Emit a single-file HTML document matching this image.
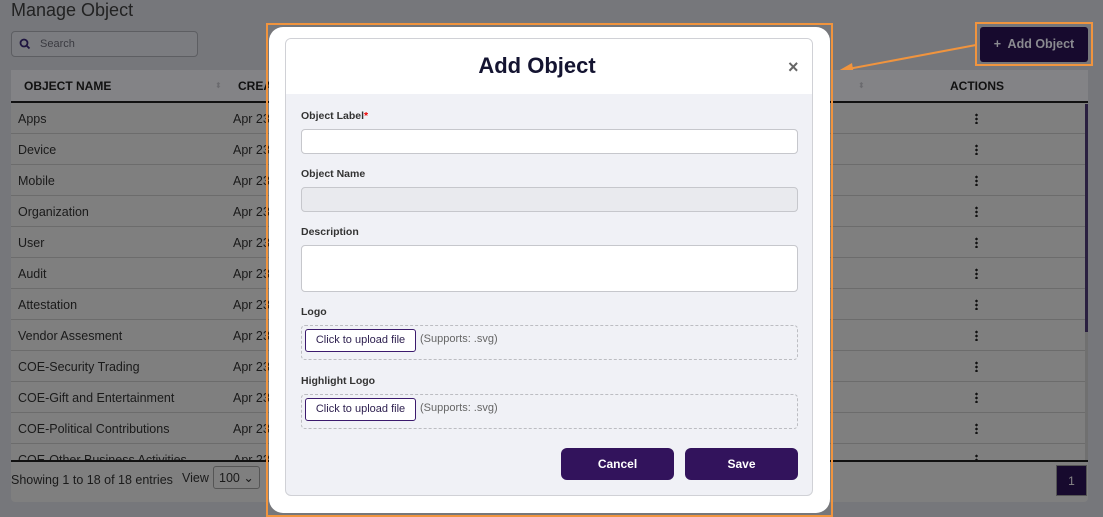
<!DOCTYPE html>
<html><head><meta charset="utf-8"><style>
*{box-sizing:border-box;margin:0;padding:0}
body{width:1103px;height:517px;overflow:hidden;background:#76777b;font-family:"Liberation Sans",sans-serif;position:relative;color:#1b1b22}
.abs{position:absolute}
.card{left:11px;top:70px;width:1077px;height:432px;background:#7f7f7f;border-radius:4px}
.hdr{left:11px;top:70px;width:1077px;height:33px;background:#838386;border-bottom:2px solid #111}
.th{top:79px;font-size:12px;font-weight:bold;color:#111}
.row{left:11px;width:1074px;height:31px;border-bottom:1px solid #6c6c6c;font-size:12.5px;color:#1a1a1a}
.row span{position:absolute;top:9px}
.dots{position:absolute;left:964px;top:10px;width:3px;height:11px;background:radial-gradient(circle,#111 1.2px,transparent 1.4px) 0 0/3px 4px repeat-y}
.lbl{left:301px;font-size:10.5px;font-weight:bold;color:#333}
.inp{left:301px;width:497px;background:#fff;border:1px solid #c6c7cc;border-radius:4px}
.drop{left:301px;width:497px;height:35px;border:1px dashed #bcbdc2;border-radius:4px}
.up{position:absolute;left:3px;top:3px;width:111px;height:23px;border:1px solid #3b1a6d;border-radius:3px;background:#fff;font-size:11px;color:#2b1d4d;text-align:center;line-height:21px}
.sup{position:absolute;left:118px;top:7px;font-size:11px;color:#666}
.btn{top:448px;width:113px;height:32px;background:#32135c;border-radius:6px;color:#fff;font-size:12px;font-weight:bold;text-align:center;line-height:32px}
</style></head><body>
<div class="abs" style="left:11px;top:0px;font-size:18px;color:#222">Manage Object</div>
<div class="abs" style="left:11px;top:31px;width:187px;height:26px;border:1px solid #5d5e62;border-radius:4px;background:#7b7c80"></div>
<svg class="abs" style="left:19px;top:38px" width="12" height="12" viewBox="0 0 12 12"><circle cx="5" cy="5" r="3.5" fill="none" stroke="#1e1440" stroke-width="1.8"/><path d="M7.5 7.5L10.5 10.5" stroke="#1e1440" stroke-width="1.8"/></svg>
<div class="abs" style="left:40px;top:38px;font-size:11px;color:#3a3a40">Search</div>
<div class="abs" style="left:980px;top:27px;width:108px;height:35px;background:#170a2e;border-radius:3px;color:#8a8a90;font-size:12.5px;font-weight:bold;line-height:35px;text-align:center">+&nbsp; Add Object</div>
<div class="abs" style="left:975px;top:22px;width:118px;height:44px;border:2px solid #f0943e"></div>
<svg class="abs" style="left:830px;top:40px" width="150" height="40"><path d="M146 5L18 29" stroke="#f0943e" stroke-width="2"/><path d="M8 31L22 23L24 35Z" fill="#f0943e"/></svg>
<div class="abs card"></div>
<div class="abs hdr"></div>
<div class="abs th" style="left:24px">OBJECT NAME</div>
<div class="abs th" style="left:238px">CREA</div>
<div class="abs th" style="left:950px">ACTIONS</div>
<div class="abs" style="left:215px;top:81px;font-size:8px;color:#6a6a6e">⬍</div>
<div class="abs" style="left:858px;top:81px;font-size:8px;color:#6a6a6e">⬍</div>
<div class="abs" style="left:1085px;top:104px;width:3px;height:356px;background:#707070"></div>
<div class="abs" style="left:1085px;top:104px;width:3px;height:228px;background:#2a1f40"></div>
<div class="abs row" style="top:103px"><span style="left:7px">Apps</span><span style="left:222px">Apr 23</span><i class="dots"></i></div>
<div class="abs row" style="top:134px"><span style="left:7px">Device</span><span style="left:222px">Apr 23</span><i class="dots"></i></div>
<div class="abs row" style="top:165px"><span style="left:7px">Mobile</span><span style="left:222px">Apr 23</span><i class="dots"></i></div>
<div class="abs row" style="top:196px"><span style="left:7px">Organization</span><span style="left:222px">Apr 23</span><i class="dots"></i></div>
<div class="abs row" style="top:227px"><span style="left:7px">User</span><span style="left:222px">Apr 23</span><i class="dots"></i></div>
<div class="abs row" style="top:258px"><span style="left:7px">Audit</span><span style="left:222px">Apr 23</span><i class="dots"></i></div>
<div class="abs row" style="top:289px"><span style="left:7px">Attestation</span><span style="left:222px">Apr 23</span><i class="dots"></i></div>
<div class="abs row" style="top:320px"><span style="left:7px">Vendor Assesment</span><span style="left:222px">Apr 23</span><i class="dots"></i></div>
<div class="abs row" style="top:351px"><span style="left:7px">COE-Security Trading</span><span style="left:222px">Apr 23</span><i class="dots"></i></div>
<div class="abs row" style="top:382px"><span style="left:7px">COE-Gift and Entertainment</span><span style="left:222px">Apr 23</span><i class="dots"></i></div>
<div class="abs row" style="top:413px"><span style="left:7px">COE-Political Contributions</span><span style="left:222px">Apr 23</span><i class="dots"></i></div>
<div class="abs" style="left:11px;top:444px;width:1074px;height:16px;overflow:hidden"><div class="row" style="position:absolute;left:0;top:0;border:0"><span style="left:7px">COE-Other Business Activities</span><span style="left:222px">Apr 23</span><i class="dots"></i></div></div>
<div class="abs" style="left:11px;top:460px;width:1077px;height:2px;background:#111"></div>
<div class="abs" style="left:11px;top:473px;font-size:12.5px;color:#1a1a1a">Showing 1 to 18 of 18 entries</div>
<div class="abs" style="left:182px;top:471px;font-size:12.5px;color:#1a1a1a">View</div>
<div class="abs" style="left:213px;top:466px;width:47px;height:23px;border:1px solid #555;border-radius:3px;font-size:12.5px;padding:3px 0 0 5px;color:#1a1a1a">100 ⌄</div>
<div class="abs" style="left:1056px;top:465px;width:31px;height:31px;background:#170a2e;border:1px solid #555;color:#888;font-size:12px;text-align:center;line-height:30px">1</div>
<!-- modal -->
<div class="abs" style="left:266px;top:23px;width:567px;height:494px;border:2px solid #f0943e"></div>
<div class="abs" style="left:269px;top:27px;width:561px;height:486px;background:#fff;border-radius:14px"></div>
<div class="abs" style="left:285px;top:38px;width:528px;height:458px;border:1px solid #d0d1d6;border-radius:6px;background:#f0f1f6;overflow:hidden"><div style="height:55px;background:#fff"></div></div>
<div class="abs" style="left:285px;top:53px;width:504px;text-align:center;font-size:22px;font-weight:600;color:#141431">Add Object</div>
<div class="abs" style="left:788px;top:57px;font-size:18px;font-weight:bold;color:#666">×</div>
<div class="abs lbl" style="top:110px">Object Label<span style="color:#e00">*</span></div>
<div class="abs inp" style="top:129px;height:25px"></div>
<div class="abs lbl" style="top:168px">Object Name</div>
<div class="abs inp" style="top:187px;height:25px;background:#e9eaee"></div>
<div class="abs lbl" style="top:226px">Description</div>
<div class="abs inp" style="top:245px;height:47px"></div>
<div class="abs lbl" style="top:306px">Logo</div>
<div class="abs drop" style="top:325px"><div class="up">Click to upload file</div><div class="sup">(Supports: .svg)</div></div>
<div class="abs lbl" style="top:375px">Highlight Logo</div>
<div class="abs drop" style="top:394px"><div class="up">Click to upload file</div><div class="sup">(Supports: .svg)</div></div>
<div class="abs btn" style="left:561px">Cancel</div>
<div class="abs btn" style="left:685px">Save</div>
</body></html>
